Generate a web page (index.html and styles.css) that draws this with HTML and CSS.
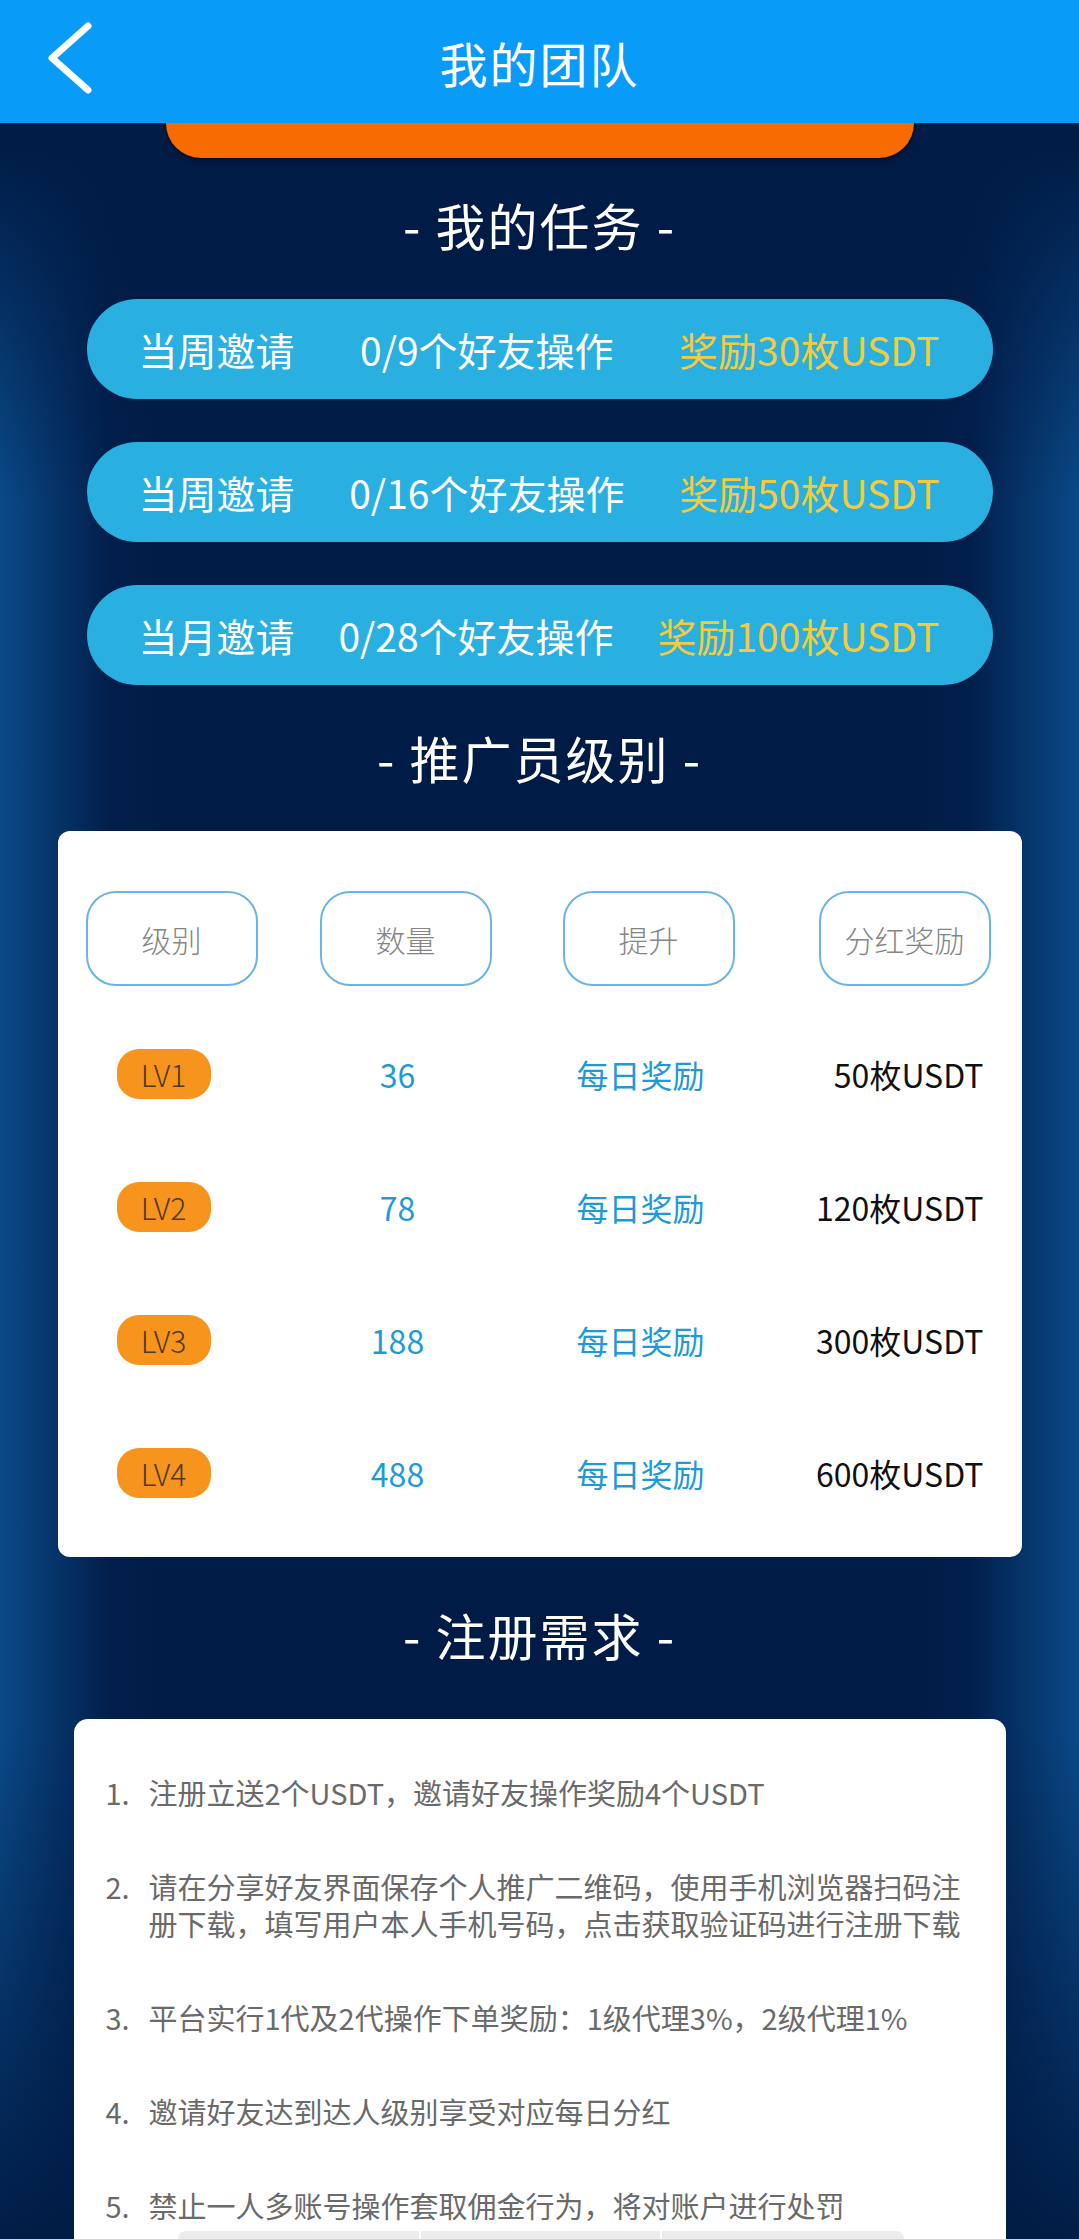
FILE: index.html
```html
<!DOCTYPE html>
<html lang="zh-CN">
<head>
    <meta charset="UTF-8">
    <meta name="viewport" content="width=device-width, initial-scale=1.0">
    <title>我的团队</title>
    <link rel="stylesheet" href="styles.css">
</head>
<body>
    <header class="top-bar">
        <a class="back" href="#">
            <svg width="60" height="76" viewBox="0 0 60 76">
                <polyline points="48,6 12,38 48,70" fill="none" stroke="#fff" stroke-width="7" stroke-linecap="round" stroke-linejoin="round"/>
            </svg>
        </a>
        <h1>我的团队</h1>
        <span></span>
    </header>

    <div class="page">
        <div class="invite-btn"></div>

        <h2 class="section-title">- 我的任务 -</h2>
        <div class="task">
            <span>当周邀请</span>
            <span>0/9个好友操作</span>
            <span class="reward">奖励30枚USDT</span>
        </div>
        <div class="task">
            <span>当周邀请</span>
            <span>0/16个好友操作</span>
            <span class="reward">奖励50枚USDT</span>
        </div>
        <div class="task">
            <span>当月邀请</span>
            <span>0/28个好友操作</span>
            <span class="reward">奖励100枚USDT</span>
        </div>

        <h2 class="section-title">- 推广员级别 -</h2>
        <div class="card level-card">
            <div class="level-row level-head">
                <div class="head-cell">级别</div>
                <div class="head-cell">数量</div>
                <div class="head-cell">提升</div>
                <div class="head-cell">分红奖励</div>
            </div>
            <div class="level-row">
                <div class="cell"><span class="badge">LV1</span></div>
                <div class="cell blue">36</div>
                <div class="cell blue">每日奖励</div>
                <div class="cell amount">50枚USDT</div>
            </div>
            <div class="level-row">
                <div class="cell"><span class="badge">LV2</span></div>
                <div class="cell blue">78</div>
                <div class="cell blue">每日奖励</div>
                <div class="cell amount">120枚USDT</div>
            </div>
            <div class="level-row">
                <div class="cell"><span class="badge">LV3</span></div>
                <div class="cell blue">188</div>
                <div class="cell blue">每日奖励</div>
                <div class="cell amount">300枚USDT</div>
            </div>
            <div class="level-row">
                <div class="cell"><span class="badge">LV4</span></div>
                <div class="cell blue">488</div>
                <div class="cell blue">每日奖励</div>
                <div class="cell amount">600枚USDT</div>
            </div>
        </div>

        <h2 class="section-title">- 注册需求 -</h2>
        <div class="card rule-card">
            <ol class="rules">
                <li><span class="num">1.</span><span>注册立送2个USDT，邀请好友操作奖励4个USDT</span></li>
                <li><span class="num">2.</span><span>请在分享好友界面保存个人推广二维码，使用手机浏览器扫码注册下载，填写用户本人手机号码，点击获取验证码进行注册下载</span></li>
                <li><span class="num">3.</span><span>平台实行1代及2代操作下单奖励：1级代理3%，2级代理1%</span></li>
                <li><span class="num">4.</span><span>邀请好友达到达人级别享受对应每日分红</span></li>
                <li><span class="num">5.</span><span>禁止一人多账号操作套取佣金行为，将对账户进行处罚</span></li>
            </ol>
            <div class="table-head">
                <div></div>
                <div></div>
                <div></div>
            </div>
        </div>
    </div>
</body>
</html>
```

FILE: styles.css
```css
body {
    margin: 0;
    padding: 0;
    font-family: "Noto Sans CJK SC", "Noto Sans", sans-serif;
    background-color: #001b45;
    background-image:
        linear-gradient(to bottom, #001b45 6%, rgba(0, 27, 69, 0) 22%, rgba(0, 27, 69, 0) 76%, #001a42 100%),
        linear-gradient(to right, #0a4a88 0%, #021f4c 10%, #001b45 16%, #001b45 84%, #021f4c 90%, #0a4a88 100%);
    color: #fff;
    overflow: hidden;
}

.top-bar {
    height: 123px;
    background-color: #099bf8;
    display: grid;
    grid-template-columns: 123px 1fr 123px;
    align-items: center;
}

.back {
    align-self: start;
    margin: 20px 0 0 40px;
    display: block;
    width: 60px;
    height: 76px;
}

.top-bar h1 {
    margin: 0;
    text-align: center;
    font-size: 48px;
    font-weight: 400;
    letter-spacing: 2px;
}

.page {
    display: flex;
    flex-direction: column;
    align-items: center;
}

.invite-btn {
    width: 748px;
    height: 35px;
    background-color: #f76b00;
    border-radius: 0 0 38px 38px;
    box-shadow: 0 3px 4px rgba(0, 0, 0, 0.35);
}

.section-title {
    margin: 36px 0 45px;
    height: 60px;
    line-height: 60px;
    font-size: 50px;
    font-weight: 400;
    letter-spacing: 2px;
}

.task {
    box-sizing: border-box;
    width: 906px;
    height: 100px;
    margin-bottom: 43px;
    padding: 0 53px 0 52px;
    border-radius: 50px;
    background-color: #29afe0;
    display: flex;
    align-items: center;
    justify-content: space-between;
    font-size: 39px;
}

.task:nth-of-type(4) {
    margin-bottom: 0;
}

.task .reward {
    color: #f4cb3c;
}

.page > .task + .section-title {
    margin-top: 42px;
    margin-bottom: 44px;
}

.card {
    box-sizing: border-box;
    background-color: #fff;
    border-radius: 12px;
    color: #333;
}

.level-card {
    width: 964px;
    padding: 60px 31px 18px 28px;
}

.level-row {
    display: grid;
    grid-template-columns: 234px 243px 256px 172px;
    align-items: center;
    height: 133px;
}

.level-head {
    height: 95px;
    margin-bottom: 21px;
}

.head-cell {
    box-sizing: border-box;
    width: 172px;
    height: 95px;
    border: 2px solid #6ab4e6;
    border-radius: 30px;
    display: flex;
    align-items: center;
    justify-content: center;
    font-size: 30px;
    font-weight: 300;
    color: #858585;
}

.cell {
    width: 156px;
    text-align: center;
    font-size: 32px;
}

.cell.blue {
    color: #1f9ad9;
}

.cell.amount {
    width: auto;
    justify-self: end;
    margin-right: 7px;
    white-space: nowrap;
    color: #111;
}

.badge {
    display: inline-block;
    width: 94px;
    height: 50px;
    line-height: 50px;
    border-radius: 22px;
    background-color: #f7941d;
    color: #4d3a26;
    font-size: 30px;
    font-weight: 300;
}

.level-card + .section-title {
    margin-top: 47px;
    margin-bottom: 55px;
}

.rule-card {
    width: 932px;
    padding: 55px 30px 0 32px;
    border-radius: 14px;
}

.rules {
    list-style: none;
    margin: 0;
    padding: 0;
}

.rules li {
    display: flex;
    font-size: 29px;
    line-height: 37px;
    color: #6a6a6a;
}

.rules li + li {
    margin-top: 57px;
}

.rules .num {
    flex: 0 0 43px;
}

.table-head {
    margin: 7px 0 0 72px;
    width: 722px;
    height: 44px;
    display: grid;
    grid-template-columns: 241px 239px 242px;
    gap: 2px;
}

.table-head div {
    background-color: #ececec;
}

.table-head div:first-child {
    border-top-left-radius: 8px;
}

.table-head div:last-child {
    border-top-right-radius: 8px;
}
```
